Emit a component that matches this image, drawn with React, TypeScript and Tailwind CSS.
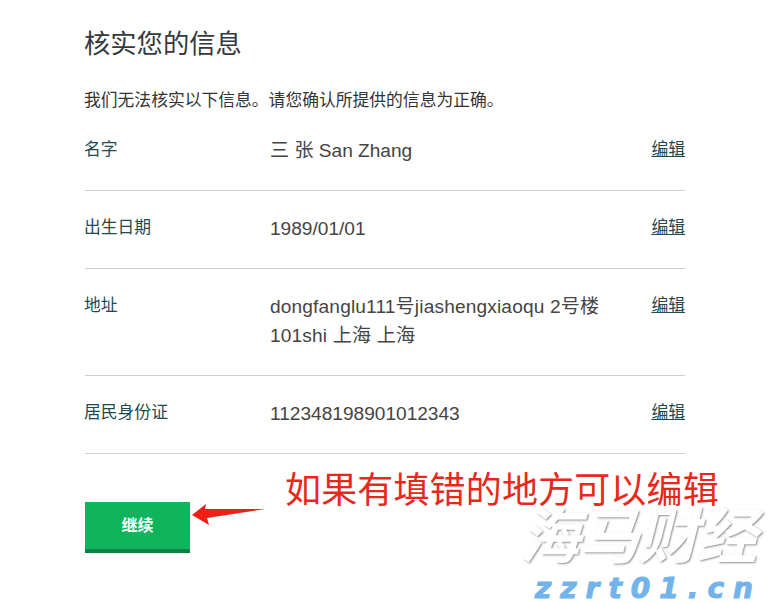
export default function App() {
  const rows = [
    { label: "名字", value: <>三 张 San Zhang</> },
    { label: "出生日期", value: <>1989/01/01</> },
    { label: "地址", value: <span className="tracking-[0.16px]">dongfanglu111号jiashengxiaoqu 2号楼<br />101shi 上海 上海</span> },
    { label: "居民身份证", value: <>112348198901012343</> },
  ];
  return (
    <div className="relative w-[770px] h-[603px] overflow-hidden bg-white font-['Liberation_Sans','Noto_Sans_CJK_SC',sans-serif]">
      <div className="ml-[85px] w-[600px] pt-[27px]">
        <h1 className="-ml-px text-[26.3px] leading-[34px] font-normal text-[#33393c]">核实您的信息</h1>
        <p className="-ml-px mt-[28px] text-[16.8px] leading-[24px] text-[#333333]">我们无法核实以下信息。请您确认所提供的信息为正确。</p>
        <div>
          {rows.map((r) => (
            <div key={r.label} className="flex items-start border-b border-[#cfcfcf] pt-[24px] pb-[24px]">
              <div className="-ml-px w-[186px] shrink-0 text-[16.8px] leading-[26px] text-[#1f4a4f]">{r.label}</div>
              <div className="flex-1 -mt-px mb-px text-[19.1px] leading-[29px] text-[#444444]">{r.value}</div>
              <a className="shrink-0 text-[16.8px] leading-[26px] text-[#1f4a4f] underline">编辑</a>
            </div>
          ))}
        </div>
        <button className="mt-[48px] flex h-[51px] w-[105px] items-center justify-center border-b-[4px] border-[#0e7f45] bg-[#10b45c] pt-[1px] text-[16px] font-bold text-white">继续</button>
      </div>

      <div className="absolute left-[285px] top-[468px] text-[36px] leading-[46px] tracking-[0.15px] text-[#e8281c] whitespace-nowrap">如果有填错的地方可以编辑</div>
      <svg className="absolute left-[190px] top-[503px]" width="78" height="24" viewBox="0 0 78 24">
        <path d="M2 12 L16 1 L15 6 L75 6 L17 15 L19 22 Z" fill="#f01e14" />
      </svg>

      <div className="absolute left-[520px] top-[506px] text-[60px] leading-[64px] font-bold italic text-white tracking-[-1px] whitespace-nowrap [text-shadow:1px_1px_2px_#8f8f8f]">海马财经</div>
      <div className="absolute left-[535px] top-[575px] text-[28px] leading-[28px] font-bold italic text-[#72b3ea] tracking-[9px] whitespace-nowrap font-['DejaVu_Sans',sans-serif] [-webkit-text-stroke:1px_#72b3ea]">zzrt01.cn</div>
    </div>
  );
}
